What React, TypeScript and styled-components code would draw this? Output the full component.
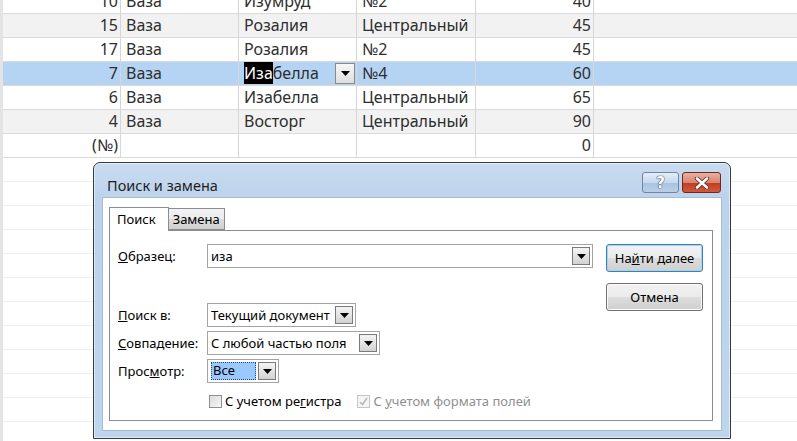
import styled, { createGlobalStyle } from "styled-components";

const GlobalStyle = createGlobalStyle`
  *, *::before, *::after {
    box-sizing: border-box;
  }
  html, body {
    margin: 0;
    padding: 0;
    background: #ffffff;
  }
  body {
    font-family: "Noto Sans", "Open Sans", sans-serif;
  }
`;

type Record = { id: string; item: string; name: string; place: string; price: string };

const records: Record[] = [
  { id: "10", item: "Ваза", name: "Изумруд", place: "№2", price: "40" },
  { id: "15", item: "Ваза", name: "Розалия", place: "Центральный", price: "45" },
  { id: "17", item: "Ваза", name: "Розалия", place: "№2", price: "45" },
  { id: "7", item: "Ваза", name: "Изабелла", place: "№4", price: "60" },
  { id: "6", item: "Ваза", name: "Изабелла", place: "Центральный", price: "65" },
  { id: "4", item: "Ваза", name: "Восторг", place: "Центральный", price: "90" },
  { id: "(№)", item: "", name: "", place: "", price: "0" },
];

const SELECTED = 3;

export default function App() {
  return (
    <Screen>
      <GlobalStyle />
      <Sheet>
        {records.map((r, i) => (
          <Row key={i} $shade={i === SELECTED ? "sel" : i % 2 === 1 ? "alt" : "plain"}>
            <NumCell>{r.id}</NumCell>
            <TextCell>{r.item}</TextCell>
            <TextCell>
              {i === SELECTED ? (
                <>
                  <Found>Иза</Found>белла
                  <CellDrop>
                    <Arrow />
                  </CellDrop>
                </>
              ) : (
                r.name
              )}
            </TextCell>
            <TextCell $wide>{r.place}</TextCell>
            <NumCell>{r.price}</NumCell>
            <Filler />
          </Row>
        ))}
        {Array.from({ length: 12 }).map((_, i) => (
          <EmptyRow key={"e" + i} />
        ))}
      </Sheet>

      <Dialog>
        <TitleBar>
          <Title>Поиск и замена</Title>
          <CaptionButtons>
            <HelpButton>?</HelpButton>
            <CloseButton>
              <svg width="16" height="12" viewBox="0 0 16 12">
                <path
                  d="M3 1.5 L13 10.5 M13 1.5 L3 10.5"
                  stroke="#5a2a22"
                  strokeWidth="4.2"
                  strokeLinecap="round"
                />
                <path
                  d="M3 1.5 L13 10.5 M13 1.5 L3 10.5"
                  stroke="#ffffff"
                  strokeWidth="2.6"
                  strokeLinecap="round"
                />
              </svg>
            </CloseButton>
          </CaptionButtons>
        </TitleBar>

        <Client>
          <Tabs>
            <Tab $active>Поиск</Tab>
            <Tab>Замена</Tab>
          </Tabs>
          <Panel>
            <Form>
              <FieldRow>
                <Label>
                  <u>О</u>бразец:
                </Label>
                <TextBox $width={386}>
                  <span>иза</span>
                  <DropButton>
                    <Arrow />
                  </DropButton>
                </TextBox>
              </FieldRow>

              <ComboGroup>
                <FieldRow>
                  <Label>
                    <u>П</u>оиск в:
                  </Label>
                  <TextBox $width={149}>
                    <span>Текущий документ</span>
                    <DropButton>
                      <Arrow />
                    </DropButton>
                  </TextBox>
                </FieldRow>
                <FieldRow>
                  <Label>
                    <u>С</u>овпадение:
                  </Label>
                  <TextBox $width={173}>
                    <span>С любой частью поля</span>
                    <DropButton>
                      <Arrow />
                    </DropButton>
                  </TextBox>
                </FieldRow>
                <FieldRow>
                  <Label>
                    Прос<u>м</u>отр:
                  </Label>
                  <TextBox $width={72}>
                    <Selected>Все</Selected>
                    <DropButton>
                      <Arrow />
                    </DropButton>
                  </TextBox>
                </FieldRow>
              </ComboGroup>

              <Checks>
                <Check>
                  <Box />
                  <span>
                    С учетом ре<u>г</u>истра
                  </span>
                </Check>
                <Check $disabled>
                  <Box $disabled>
                    <svg width="11" height="11" viewBox="0 0 11 11">
                      <path d="M2 6 L4.5 8.5 L9 2" fill="none" stroke="#b9b9b9" strokeWidth="1.6" />
                    </svg>
                  </Box>
                  <span>
                    С <u>у</u>четом формата полей
                  </span>
                </Check>
              </Checks>
            </Form>

            <Buttons>
              <PushButton $default>
                <span>
                  На<u>й</u>ти далее
                </span>
              </PushButton>
              <PushButton>
                <span>Отмена</span>
              </PushButton>
            </Buttons>
          </Panel>
        </Client>
      </Dialog>
    </Screen>
  );
}

function Arrow() {
  return (
    <svg width="9" height="5" viewBox="0 0 9 5">
      <path d="M0 0 H9 L4.5 5 Z" fill="#000" />
    </svg>
  );
}

const Screen = styled.div`
  position: relative;
  width: 797px;
  height: 441px;
  overflow: hidden;
  background: #ffffff;
`;

const Sheet = styled.div`
  display: flex;
  flex-direction: column;
  margin-top: -10px;
  border-left: 3px solid #e4e4e4;
  font-family: "Noto Sans", "Open Sans", sans-serif;
  font-size: 16px;
  color: #2e2e2e;
`;

const shades = {
  plain: "#ffffff",
  alt: "#f2f2f2",
  sel: "#b5d4f4",
};

const Row = styled.div<{ $shade: keyof typeof shades }>`
  display: flex;
  height: 24px;
  border-bottom: 1px solid #dadada;
  background: ${(p) => shades[p.$shade]};
`;

const CellBase = styled.div`
  position: relative;
  width: 118px;
  flex: none;
  border-right: 1px solid #d6d6d6;
  line-height: 23px;
  white-space: nowrap;
  overflow: hidden;
`;

const NumCell = styled(CellBase)`
  text-align: right;
  padding-right: 2px;
`;

const TextCell = styled(CellBase)<{ $wide?: boolean }>`
  padding-left: 5px;
  width: ${(p) => (p.$wide ? "119px" : "118px")};
`;

const Filler = styled.div`
  flex: 1;
`;

const EmptyRow = styled.div`
  height: 24px;
  flex: none;
  border-bottom: 1px solid #f0f0f0;
`;

const Found = styled.span`
  background: #000;
  color: #fff;
`;

const CellDrop = styled.div`
  position: absolute;
  right: 1px;
  top: 1px;
  width: 20px;
  height: 21px;
  border: 1px solid #8a8a8a;
  background: linear-gradient(#f7f7f7, #dedede);
  display: flex;
  align-items: center;
  justify-content: center;
`;

const Dialog = styled.div`
  position: absolute;
  left: 93px;
  top: 162px;
  width: 638px;
  height: 277px;
  border: 1px solid #2f3a44;
  border-radius: 7px 7px 0 0;
  background: linear-gradient(#c9dbef, #bad2ec 40px, #bfd5ed);
  box-shadow: inset 0 0 0 1px rgba(255, 255, 255, 0.55);
  display: flex;
  flex-direction: column;
  padding: 0 8px 7px 8px;
  font-family: "Noto Sans", "Open Sans", sans-serif;
  font-size: 13px;
  color: #000;
`;

const TitleBar = styled.div`
  height: 34px;
  flex: none;
  display: flex;
  align-items: flex-start;
  justify-content: space-between;
`;

const Title = styled.div`
  margin: 12px 0 0 5px;
  font-size: 14.5px;
  color: #1e1e1e;
`;

const CaptionButtons = styled.div`
  display: flex;
  gap: 3px;
  margin-top: 9px;
  margin-right: 1px;
`;

const HelpButton = styled.div`
  width: 37px;
  height: 21px;
  border: 1px solid #6f86a3;
  border-radius: 3px;
  background: linear-gradient(#e3edf8, #c7d9ee 50%, #a9c2e0 51%, #b9cfe8);
  display: flex;
  align-items: center;
  justify-content: center;
  font-family: "DejaVu Sans", sans-serif;
  font-weight: bold;
  font-size: 15px;
  color: #fff;
  text-shadow: 0 0 1px #3d4f66, 0 0 1px #3d4f66, 0 0 1px #3d4f66;
`;

const CloseButton = styled.div`
  width: 39px;
  height: 21px;
  border: 1px solid #6b2a20;
  border-radius: 3px;
  background: linear-gradient(#eab0a2, #d9846f 50%, #c13c23 51%, #cf5a3e);
  display: flex;
  align-items: center;
  justify-content: center;
`;

const Client = styled.div`
  flex: 1;
  background: #ffffff;
  border: 1px solid #a9bcd3;
  padding: 9px 8px 9px 6px;
  display: flex;
  flex-direction: column;
`;

const Tabs = styled.div`
  display: flex;
  align-items: flex-end;
  height: 23px;
  flex: none;
  position: relative;
  z-index: 1;
`;

const Tab = styled.div<{ $active?: boolean }>`
  height: ${(p) => (p.$active ? "24px" : "22px")};
  margin-bottom: ${(p) => (p.$active ? "-1px" : "0")};
  padding: ${(p) => (p.$active ? "0 12px 2px 7px" : "0 4px")};
  border: 1px solid #898c95;
  border-bottom: ${(p) => (p.$active ? "none" : "1px solid #898c95")};
  border-left: ${(p) => (p.$active ? "1px solid #898c95" : "none")};
  background: ${(p) =>
    p.$active ? "#ffffff" : "linear-gradient(#f2f2f2, #ebebeb 50%, #dddddd 51%, #cfcfcf)"};
  display: flex;
  align-items: center;
  font-size: 13px;
`;

const Panel = styled.div`
  flex: 1;
  border: 1px solid #898c95;
  background: #ffffff;
  padding: 13px 9px 0 7px;
  display: flex;
  align-items: flex-start;
`;

const Form = styled.div`
  display: flex;
  flex-direction: column;
  width: 476px;
`;

const FieldRow = styled.div`
  display: flex;
  align-items: center;
`;

const Label = styled.div`
  width: 90px;
  flex: none;
  padding-left: 1px;
`;

const TextBox = styled.div<{ $width: number }>`
  width: ${(p) => p.$width}px;
  height: 24px;
  border: 1px solid #a4a4a4;
  display: flex;
  align-items: center;
  justify-content: space-between;
  padding: 0 2px 0 3px;
  background: #fff;
  white-space: nowrap;
`;

const DropButton = styled.div`
  width: 18px;
  height: 18px;
  border: 1px solid #7a7a7a;
  background: linear-gradient(#f4f4f4, #e4e4e4 50%, #d2d2d2);
  display: flex;
  align-items: center;
  justify-content: center;
  flex: none;
`;

const Selected = styled.span`
  flex: 1;
  margin-right: 2px;
  height: 18px;
  line-height: 17px;
  padding-left: 2px;
  background: #99c9ff;
  outline: 1px dotted #2a4a7a;
  outline-offset: -1px;
`;

const ComboGroup = styled.div`
  display: flex;
  flex-direction: column;
  gap: 4px;
  margin-top: 35px;
`;

const Checks = styled.div`
  display: flex;
  gap: 16px;
  margin: 9px 0 0 92px;
`;

const Check = styled.label<{ $disabled?: boolean }>`
  display: flex;
  align-items: center;
  gap: 3px;
  color: ${(p) => (p.$disabled ? "#8f8f8f" : "#000")};
  white-space: nowrap;
`;

const Box = styled.span<{ $disabled?: boolean }>`
  width: 13px;
  height: 13px;
  border: 1px solid ${(p) => (p.$disabled ? "#c6c6c6" : "#8e8f8f")};
  background: ${(p) => (p.$disabled ? "#f4f4f4" : "linear-gradient(135deg, #dcdcdc, #f6f6f6)")};
  display: flex;
  align-items: center;
  justify-content: center;
`;

const Buttons = styled.div`
  display: flex;
  flex-direction: column;
  gap: 11px;
  margin-left: 13px;
`;

const PushButton = styled.div<{ $default?: boolean }>`
  width: 97px;
  height: 28px;
  border: 1px solid ${(p) => (p.$default ? "#3c7fb1" : "#707070")};
  border-radius: 3px;
  box-shadow: ${(p) => (p.$default ? "inset 0 0 0 1px #9fd5f5" : "inset 0 0 0 1px #fbfbfb")};
  background: linear-gradient(#f2f2f2, #ebebeb 50%, #dddddd 51%, #cfcfcf);
  display: flex;
  align-items: center;
  justify-content: center;
  font-size: 13px;
`;
